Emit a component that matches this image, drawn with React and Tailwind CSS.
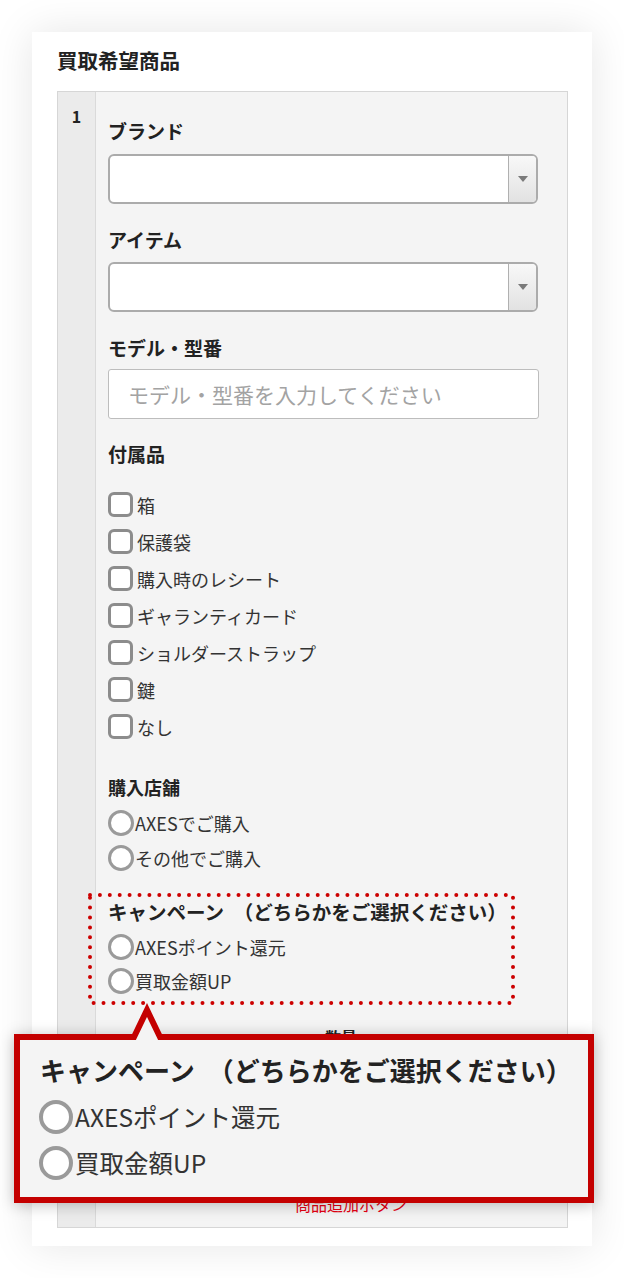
export default function App() {
  const accessories = ["箱", "保護袋", "購入時のレシート", "ギャランティカード", "ショルダーストラップ", "鍵", "なし"];

  const Select = () => (
    <div className="flex w-[430px] h-[50px] border-2 border-[#ababab] rounded-[6px] bg-white overflow-hidden">
      <div className="flex-1" />
      <div className="w-[28px] border-l border-[#b0b0b0] bg-gradient-to-b from-[#f8f8f8] to-[#e2e2e2] flex items-center justify-center">
        <svg width="10" height="6" viewBox="0 0 10 6">
          <path d="M0 0 H10 L5 6 Z" fill="#7a7a7a" />
        </svg>
      </div>
    </div>
  );

  const Checkbox = ({ label }) => (
    <div className="flex items-center h-[37px]">
      <span className="w-[25px] h-[25px] border-[3px] border-[#8c8c8c] rounded-[6px] bg-white shrink-0" />
      <span className="ml-[4px] text-[18px] leading-[24px] text-[#333]">{label}</span>
    </div>
  );

  const Radio = ({ label, h }) => (
    <div className={`flex items-center ${h}`}>
      <span className="w-[26px] h-[26px] border-[3px] border-[#9a9a9a] rounded-full bg-white shrink-0" />
      <span className="ml-[1px] text-[18px] leading-[24px] text-[#333]">{label}</span>
    </div>
  );

  return (
    <div className="relative min-h-[1278px] bg-white pt-[32px] pl-[32px] font-['Noto_Sans_CJK_JP','Noto_Sans',sans-serif] text-[#333]">
      <div className="w-[560px] bg-white shadow-[0_0_40px_rgba(0,0,0,0.10)] pl-[25px] pr-[24px] pt-[14px] pb-[18px]">
        <h2 className="text-[20.5px] leading-[28px] font-bold text-[#222] mb-[17px]">買取希望商品</h2>
        <div className="flex border border-[#d6d6d6]">
          <div className="w-[38px] shrink-0 bg-[#ebebeb] border-r border-[#dadada] text-center pt-[12px] text-[16px] leading-[24px] font-bold text-[#222]">
            1
          </div>
          <div className="flex-1 bg-[#f4f4f4] pl-[12px] pt-[27px] pb-[13px]">
            <div className="text-[19px] leading-[24px] font-bold text-[#222] mb-[11px]">ブランド</div>
            <Select />
            <div className="text-[19px] leading-[24px] font-bold text-[#222] mt-[24px] mb-[10px]">アイテム</div>
            <Select />
            <div className="text-[19px] leading-[24px] font-bold text-[#222] mt-[24px] mb-[9px]">モデル・型番</div>
            <div className="w-[431px] h-[50px] border-[1.5px] border-[#bdbdbd] rounded-[3px] bg-white flex items-center pl-[19px]">
              <span className="text-[21px] leading-[28px] text-[#a3a3a3]">モデル・型番を入力してください</span>
            </div>
            <div className="text-[19px] leading-[24px] font-bold text-[#222] mt-[23px] mb-[20px]">付属品</div>
            <div className="flex flex-col">
              {accessories.map((a) => (
                <Checkbox key={a} label={a} />
              ))}
            </div>
            <div className="text-[18px] leading-[24px] font-bold text-[#222] mt-[30px] mb-[6px]">購入店舗</div>
            <Radio label="AXESでご購入" h="h-[35px]" />
            <Radio label="その他でご購入" h="h-[35px]" />
            <div className="text-[19.5px] leading-[24px] font-bold text-[#222] mt-[25px] mb-[6px]">キャンペーン　（どちらかをご選択ください）</div>
            <Radio label="AXESポイント還元" h="h-[34px]" />
            <Radio label="買取金額UP" h="h-[34px]" />
            <div className="mt-[27px] pl-[217px] text-[16px] leading-[24px] font-bold text-[#222]">数量</div>
            <div className="h-[145px]" />
            <div className="pl-[187px] text-[16px] leading-[20px] text-[#e60012]">商品追加ボタン</div>
          </div>
        </div>
      </div>

      {/* dotted highlight */}
      <svg
        className="absolute left-[86px] top-[891px]"
        width="430"
        height="115"
        viewBox="86 891 430 115"
      >
        <rect
          x="90"
          y="895"
          width="423"
          height="108"
          fill="none"
          stroke="#cc0000"
          strokeWidth="4"
          strokeDasharray="0 9.9"
          strokeLinecap="round"
        />
      </svg>

      {/* callout */}
      <div className="absolute left-[14px] top-[1034px] w-[580px] h-[169px] border-[6px] border-[#c40000] bg-[#f4f4f4] shadow-[0_2px_14px_rgba(0,0,0,0.25)] pl-[19px] pt-[14px]">
        <div className="text-[26px] leading-[32px] font-bold text-[#222] pl-[1px]">キャンペーン　（どちらかをご選択ください）</div>
        <div className="mt-[8px]">
          <div className="flex items-center h-[46px]">
            <span className="w-[34px] h-[34px] border-[4px] border-[#9a9a9a] rounded-full bg-white shrink-0" />
            <span className="ml-[2px] text-[24.5px] leading-[30px] text-[#333]">AXESポイント還元</span>
          </div>
          <div className="flex items-center h-[46px]">
            <span className="w-[34px] h-[34px] border-[4px] border-[#9a9a9a] rounded-full bg-white shrink-0" />
            <span className="ml-[2px] text-[24.5px] leading-[30px] text-[#333]">買取金額UP</span>
          </div>
        </div>
      </div>

      {/* callout pointer */}
      <svg className="absolute left-[100px] top-[995px]" width="100" height="50" viewBox="100 995 100 50">
        <polygon points="131,1042 147,1011 163,1042" fill="#f4f4f4" />
        <path
          d="M 110 1037 L 134 1037 L 147 1010 L 160 1037 L 184 1037"
          fill="none"
          stroke="#c40000"
          strokeWidth="6"
          strokeLinejoin="miter"
        />
      </svg>
    </div>
  );
}
